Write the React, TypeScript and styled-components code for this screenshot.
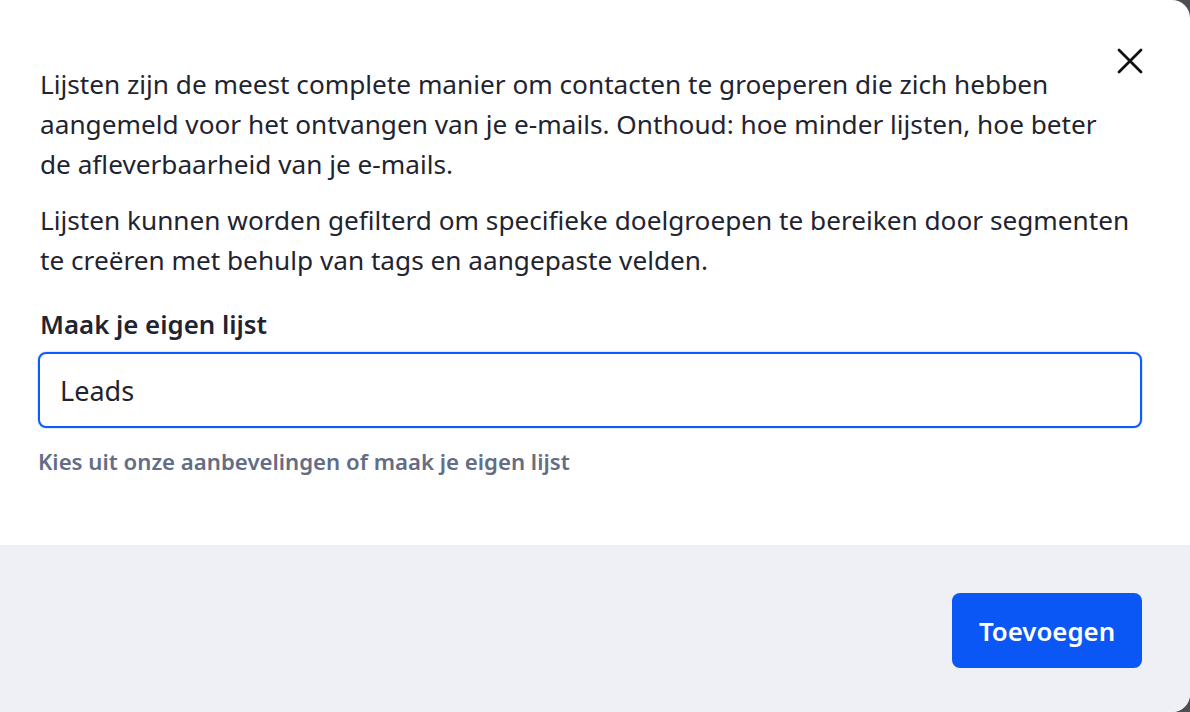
import * as React from "react"
import styled, {createGlobalStyle} from "styled-components";

const GlobalStyle = createGlobalStyle`
  html, body {
    margin: 0;
    padding: 0;
    background: #4d4d52;
  }
  body {
    font-family: 'Noto Sans', 'Open Sans', sans-serif;
  }
`

// each paragraph is kept as its rendered lines so the wrapping matches the design
const intro = [
  [
    'Lijsten zijn de meest complete manier om contacten te groeperen die zich hebben',
    'aangemeld voor het ontvangen van je e-mails. Onthoud: hoe minder lijsten, hoe beter',
    'de afleverbaarheid van je e-mails.'
  ],
  [
    'Lijsten kunnen worden gefilterd om specifieke doelgroepen te bereiken door segmenten',
    'te creëren met behulp van tags en aangepaste velden.'
  ]
]

const CloseIcon = () => (
  <svg width="26" height="26" viewBox="0 0 26 26" fill="none">
    <path d="M2 2L24 24M24 2L2 24" stroke="#111" strokeWidth="2.8" strokeLinecap="round"/>
  </svg>
)

const App = () => {
  const [name, setName] = React.useState('Leads')

  return (
    <>
      <GlobalStyle/>
      <Modal>
        <Body>
          <CloseButton aria-label="Sluiten"><CloseIcon/></CloseButton>
          <Intro>
            {intro.map((lines, i) => (
              <Paragraph key={i}>
                {lines.map((line, j) => <Line key={j}>{line}</Line>)}
              </Paragraph>
            ))}
          </Intro>
          <Field>
            <Label htmlFor="list-name">Maak je eigen lijst</Label>
            <Input
              id="list-name"
              value={name}
              onChange={e => setName(e.target.value)}
              autoFocus
            />
            <Hint>Kies uit onze aanbevelingen of maak je eigen lijst</Hint>
          </Field>
        </Body>
        <Footer>
          <PrimaryButton>Toevoegen</PrimaryButton>
        </Footer>
      </Modal>
    </>
  )
}

const Modal = styled.div`
  width: 1190px;
  height: 712px;
  background: #fff;
  border-radius: 0 18px 18px 0;
  overflow: hidden;
  display: flex;
  flex-direction: column;
`
const Body = styled.div`
  position: relative;
  flex: 1;
  padding: 64px 48px 0 40px;
`
const CloseButton = styled.button`
  position: absolute;
  top: 48px;
  right: 47px;
  width: 26px;
  height: 26px;
  padding: 0;
  border: none;
  background: none;
  cursor: pointer;
  display: flex;
`
const Intro = styled.div`
  display: flex;
  flex-direction: column;
  gap: 16px;
`
const Paragraph = styled.p`
  margin: 0;
  font-size: 26.2px;
  line-height: 40px;
  color: #1f2430;
`
const Line = styled.span`
  display: block;
  white-space: nowrap;
`
const Field = styled.div`
  display: flex;
  flex-direction: column;
  margin-top: 24px;
`
const Label = styled.label`
  font-size: 25.8px;
  line-height: 40px;
  font-weight: 600;
  color: #1f2430;
  margin-bottom: 8px;
`
const Input = styled.input`
  box-sizing: border-box;
  width: 1104px;
  margin-left: -2px;
  height: 76px;
  padding: 0 20px;
  border: 2px solid #0b5cff;
  border-radius: 8px;
  box-shadow: 0 0 0 1px rgba(11, 92, 255, 0.12);
  font-family: inherit;
  font-size: 27px;
  color: #1f2430;
  caret-color: #111;
  outline: none;
`
const Hint = styled.div`
  margin-top: 20px;
  font-size: 22.2px;
  line-height: 28px;
  font-weight: 600;
  color: #636d85;
  margin-left: -2px;
`
const Footer = styled.div`
  height: 167px;
  flex-shrink: 0;
  box-sizing: border-box;
  background: #eff0f5;
  display: flex;
  justify-content: flex-end;
  align-items: flex-start;
  padding: 48px 48px 0 0;
`
const PrimaryButton = styled.button`
  width: 190px;
  height: 75px;
  border: none;
  border-radius: 8px;
  background: #0b57f5;
  color: #fff;
  font-family: inherit;
  font-size: 25.8px;
  font-weight: 600;
  cursor: pointer;
`

export default App
